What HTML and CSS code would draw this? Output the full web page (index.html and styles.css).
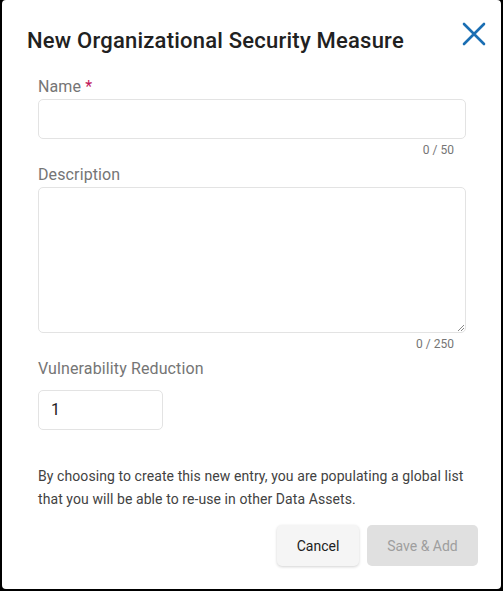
FILE: index.html
```html
<!DOCTYPE html>
<html>
<head>
<meta charset="utf-8">
<link rel="stylesheet" href="styles.css">
</head>
<body>
<div class="dialog">
  <div class="header">
    <h1 class="title">New Organizational Security Measure</h1>
    <button class="close" aria-label="Close">
      <svg width="26" height="26" viewBox="0 0 26 26"><path d="M3 3 L23 23 M23 3 L3 23" stroke="#1a6eb3" stroke-width="2.6" fill="none" stroke-linecap="round"/></svg>
    </button>
  </div>
  <div class="body">
    <div class="field">
      <label class="label">Name <span class="req">*</span></label>
      <div class="input"></div>
      <div class="counter">0 / 50</div>
    </div>
    <div class="field">
      <label class="label">Description</label>
      <div class="input textarea">
        <svg class="grip" width="9" height="9" viewBox="0 0 9 9"><path d="M8 2 L2 8 M8 5 L5 8" stroke="#888" stroke-width="1"/></svg>
      </div>
      <div class="counter">0 / 250</div>
    </div>
    <div class="field">
      <label class="label">Vulnerability Reduction</label>
      <div class="input small">1</div>
    </div>
    <p class="note">By choosing to create this new entry, you are populating a global list that you will be able to re-use in other Data Assets.</p>
    <div class="actions">
      <button class="btn cancel">Cancel</button>
      <button class="btn save">Save &amp; Add</button>
    </div>
  </div>
</div>
</body>
</html>
```

FILE: styles.css
```css
html, body {
  margin: 0;
  padding: 0;
  background: #000;
}
body {
  width: 503px;
  height: 591px;
  font-family: Roboto, "Noto Sans", sans-serif;
}
.dialog {
  margin: 0 2px;
  height: 589px;
  background: #fff;
  border-radius: 4px;
  box-sizing: border-box;
  position: relative;
}
.header {
  display: flex;
  justify-content: space-between;
  align-items: flex-start;
  padding: 26px 14px 0 25px;
}
.title {
  margin: 0;
  font-size: 22px;
  font-weight: 500;
  color: #212121;
  line-height: 30px;
  letter-spacing: 0.22px;
}
.close {
  background: none;
  border: none;
  padding: 0;
  margin-top: -5px;
  width: 26px;
  height: 26px;
  cursor: pointer;
}
.body {
  padding: 21px 35px 0 36px;
}
.field {
  display: flex;
  flex-direction: column;
}
.label {
  font-size: 16px;
  color: #757575;
  line-height: 20px;
  margin-bottom: 2px;
  letter-spacing: 0.12px;
}
.req {
  color: #c2185b;
}
.input {
  height: 40px;
  border: 1px solid #e3e3e3;
  border-radius: 5px;
  box-sizing: border-box;
  position: relative;
}
.textarea {
  height: 146px;
}
.grip {
  position: absolute;
  right: 0;
  bottom: 0;
}
.small {
  width: 125px;
  font-size: 16px;
  color: #212121;
  padding-left: 12px;
  line-height: 38px;
  margin-top: 9px;
}
.counter {
  align-self: flex-end;
  font-size: 12px;
  color: #757575;
  line-height: 14px;
  margin: 4px 12px 8px 0;
}
.note {
  margin: 35px 0 0 0;
  font-size: 14px;
  line-height: 23px;
  color: #424242;
  letter-spacing: 0.08px;
}
.actions {
  display: flex;
  justify-content: flex-end;
  gap: 8px;
  margin-top: 14px;
  margin-right: -12px;
}
.btn {
  font-family: Roboto, "Noto Sans", sans-serif;
  font-size: 14px;
  height: 41px;
  border: none;
  border-radius: 5px;
  padding: 0;
}
.cancel {
  background: #f5f5f5;
  color: #212121;
  width: 82px;
  box-shadow: 0 1px 3px rgba(0,0,0,0.18);
}
.save {
  background: #e0e0e0;
  color: #9e9e9e;
  width: 111px;
}
```
